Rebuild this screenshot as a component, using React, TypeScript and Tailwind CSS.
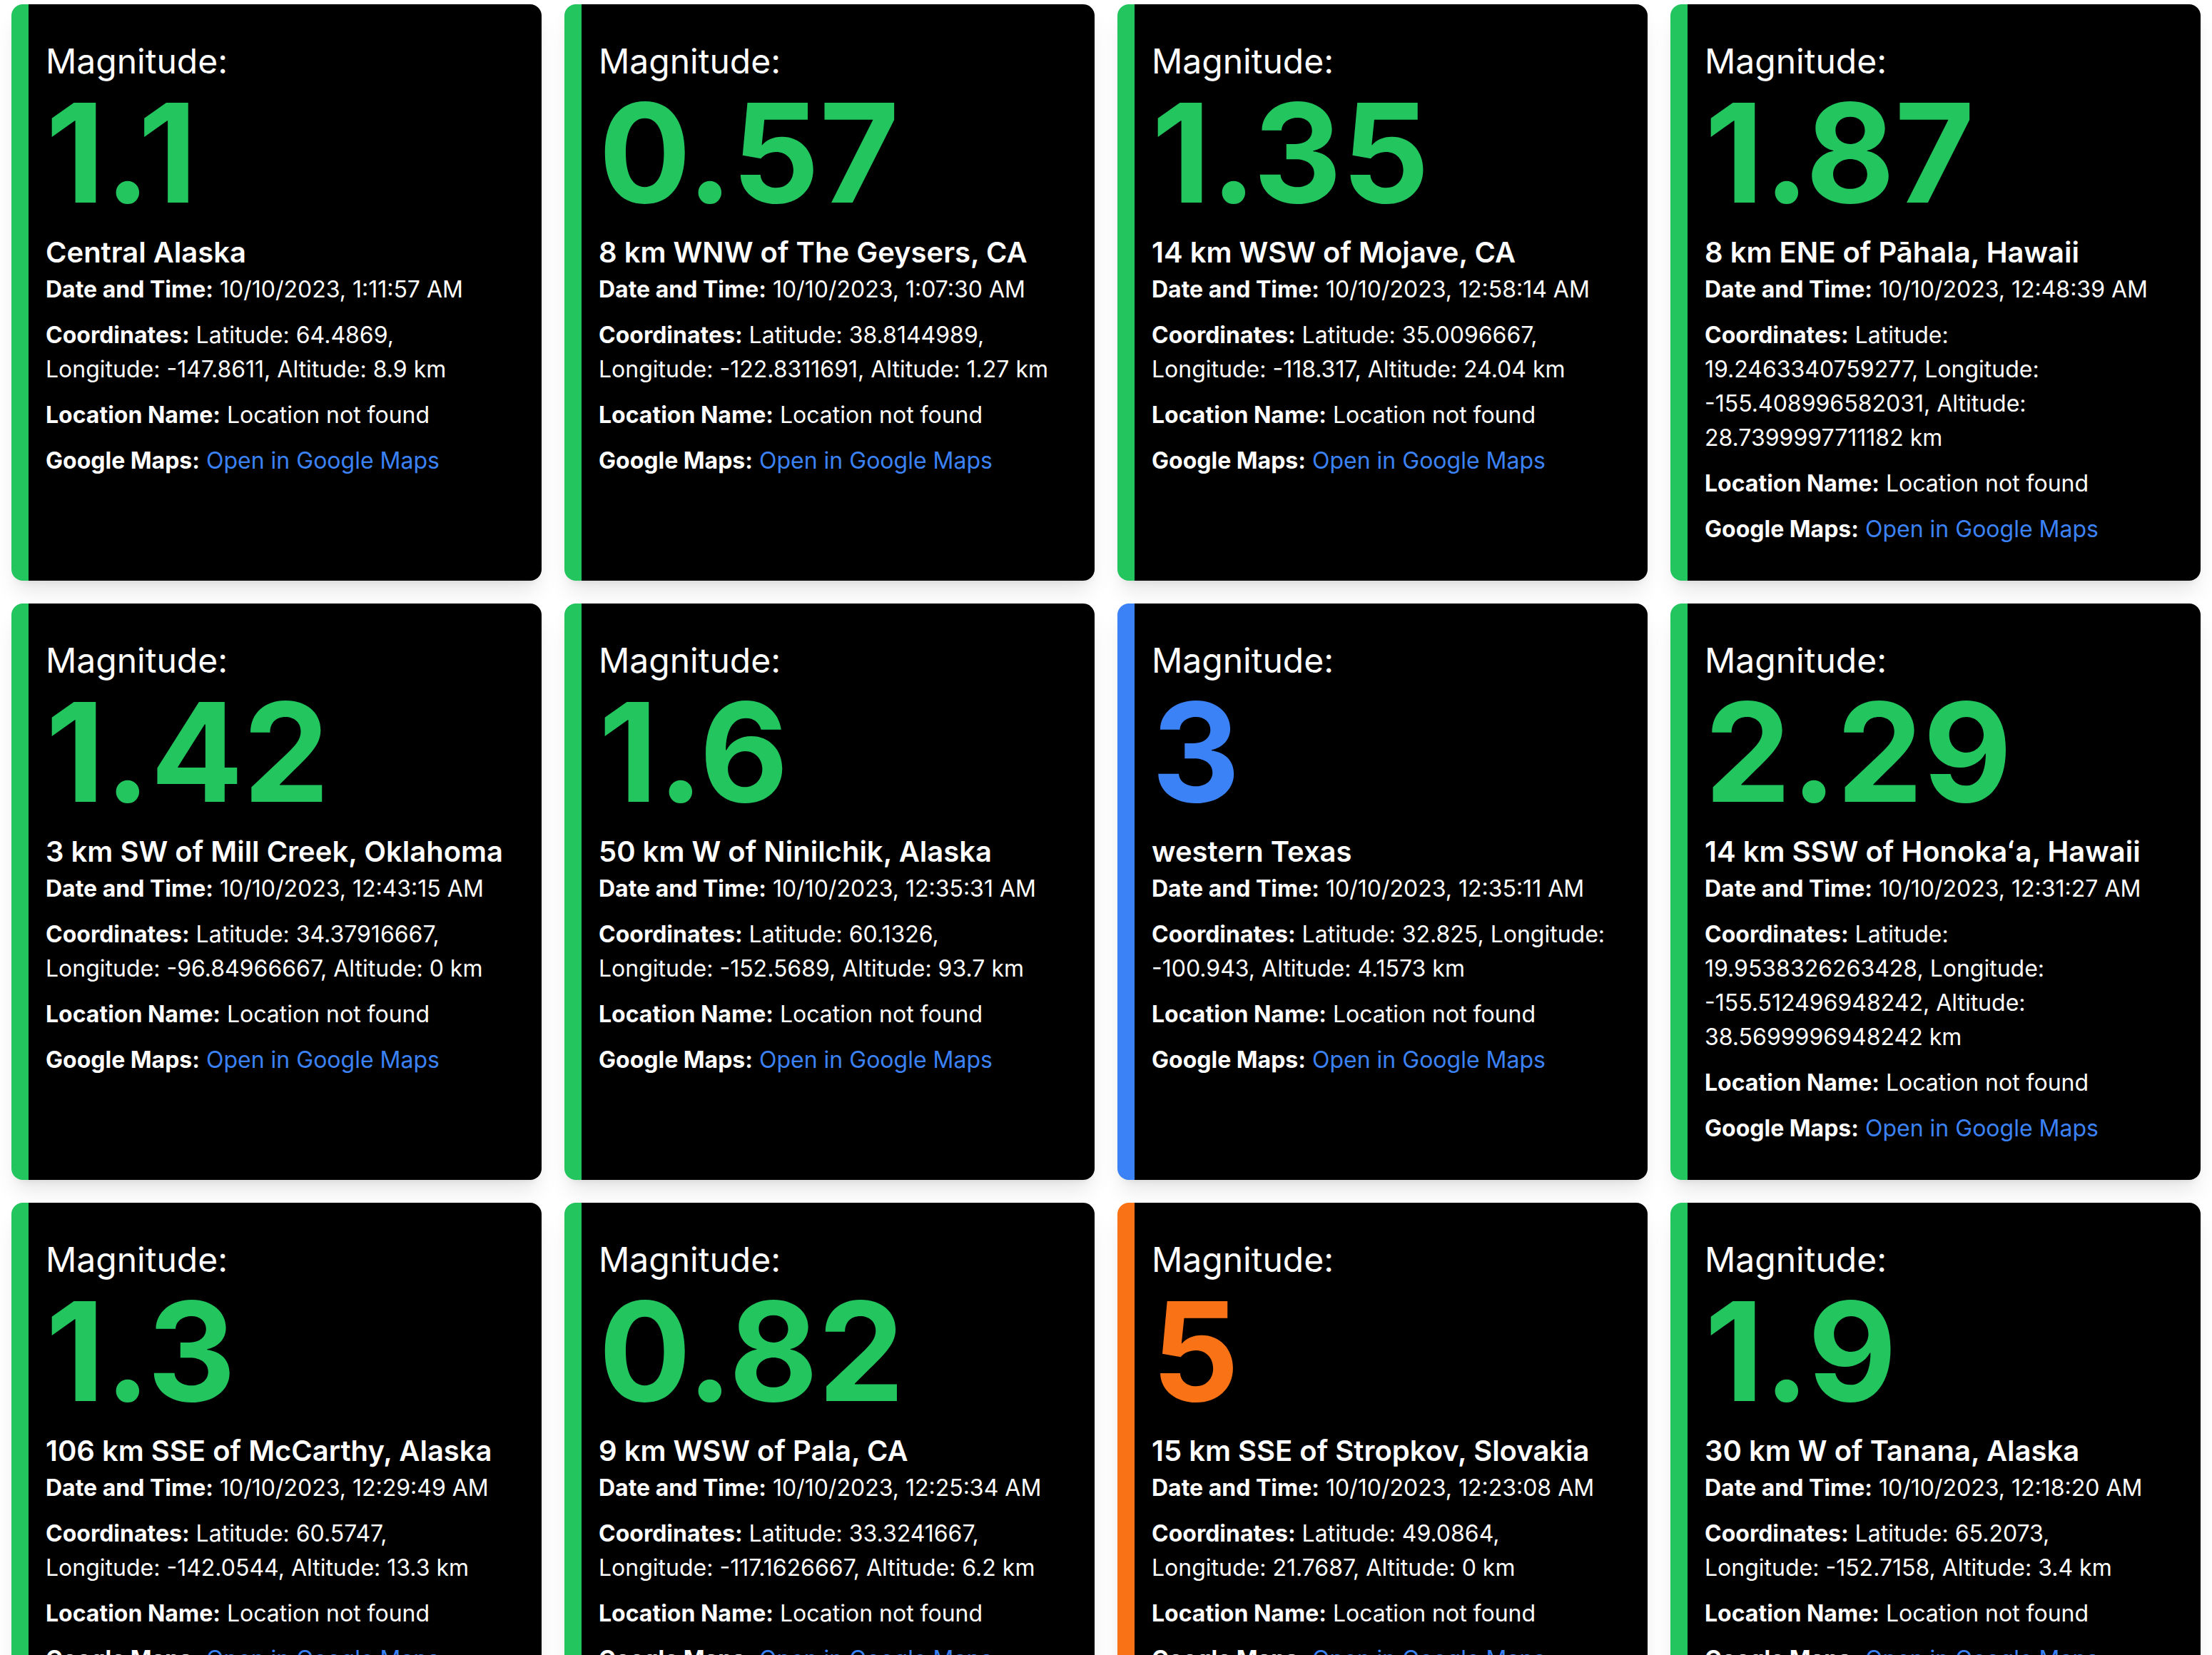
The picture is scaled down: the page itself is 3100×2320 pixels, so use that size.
import React from "react";

type Quake = {
  mag: string;
  color: "green" | "blue" | "orange";
  place: string;
  time: string;
  lat: string;
  lon: string;
  alt: string;
};

const quakes: Quake[] = [
  { mag: "1.1", color: "green", place: "Central Alaska", time: "10/10/2023, 1:11:57 AM", lat: "64.4869", lon: "-147.8611", alt: "8.9" },
  { mag: "0.57", color: "green", place: "8 km WNW of The Geysers, CA", time: "10/10/2023, 1:07:30 AM", lat: "38.8144989", lon: "-122.8311691", alt: "1.27" },
  { mag: "1.35", color: "green", place: "14 km WSW of Mojave, CA", time: "10/10/2023, 12:58:14 AM", lat: "35.0096667", lon: "-118.317", alt: "24.04" },
  { mag: "1.87", color: "green", place: "8 km ENE of Pāhala, Hawaii", time: "10/10/2023, 12:48:39 AM", lat: "19.2463340759277", lon: "-155.408996582031", alt: "28.7399997711182" },
  { mag: "1.42", color: "green", place: "3 km SW of Mill Creek, Oklahoma", time: "10/10/2023, 12:43:15 AM", lat: "34.37916667", lon: "-96.84966667", alt: "0" },
  { mag: "1.6", color: "green", place: "50 km W of Ninilchik, Alaska", time: "10/10/2023, 12:35:31 AM", lat: "60.1326", lon: "-152.5689", alt: "93.7" },
  { mag: "3", color: "blue", place: "western Texas", time: "10/10/2023, 12:35:11 AM", lat: "32.825", lon: "-100.943", alt: "4.1573" },
  { mag: "2.29", color: "green", place: "14 km SSW of Honokaʻa, Hawaii", time: "10/10/2023, 12:31:27 AM", lat: "19.9538326263428", lon: "-155.512496948242", alt: "38.5699996948242" },
  { mag: "1.3", color: "green", place: "106 km SSE of McCarthy, Alaska", time: "10/10/2023, 12:29:49 AM", lat: "60.5747", lon: "-142.0544", alt: "13.3" },
  { mag: "0.82", color: "green", place: "9 km WSW of Pala, CA", time: "10/10/2023, 12:25:34 AM", lat: "33.3241667", lon: "-117.1626667", alt: "6.2" },
  { mag: "5", color: "orange", place: "15 km SSE of Stropkov, Slovakia", time: "10/10/2023, 12:23:08 AM", lat: "49.0864", lon: "21.7687", alt: "0" },
  { mag: "1.9", color: "green", place: "30 km W of Tanana, Alaska", time: "10/10/2023, 12:18:20 AM", lat: "65.2073", lon: "-152.7158", alt: "3.4" },
];

const borderClass = {
  green: "border-[#22c55e]",
  blue: "border-[#3b82f6]",
  orange: "border-[#f97316]",
};
const textClass = {
  green: "text-[#22c55e]",
  blue: "text-[#3b82f6]",
  orange: "text-[#f97316]",
};

function Card({ q }: { q: Quake }) {
  return (
    <div
      className={`bg-black rounded-[16px] border-l-[24px] ${borderClass[q.color]} pl-[24px] pr-[54px] pt-[48px] pb-[48px] text-white shadow-[0_20px_30px_-6px_rgba(0,0,0,0.1),0_8px_12px_-8px_rgba(0,0,0,0.1)]`}
    >
      <div className="text-[48px] leading-[64px] font-normal">Magnitude:</div>
      <div className={`text-[192px] leading-[192px] font-bold ${textClass[q.color]}`}>{q.mag}</div>
      <div className="mt-[16px] text-[40px] leading-[56px] font-semibold">{q.place}</div>
      <p className="text-[32px] leading-[48px]">
        <span className="font-bold">Date and Time:</span> {q.time}
      </p>
      <p className="mt-[16px] text-[32px] leading-[48px]">
        <span className="font-bold">Coordinates:</span> Latitude: {q.lat}, Longitude: {q.lon}, Altitude: {q.alt} km
      </p>
      <p className="mt-[16px] text-[32px] leading-[48px]">
        <span className="font-bold">Location Name:</span> Location not found
      </p>
      <p className="mt-[16px] text-[32px] leading-[48px]">
        <span className="font-bold">Google Maps:</span>{" "}
        <a href="#" className="text-[#3b82f6]">Open in Google Maps</a>
      </p>
    </div>
  );
}

export default function App() {
  return (
    <div
      className="min-h-screen bg-white"
      style={{ fontFamily: "Inter, 'Noto Sans', sans-serif" }}
    >
      <div className="grid grid-cols-4 gap-[32px] px-[16px] pt-[6px] pb-[32px]">
        {quakes.map((q, i) => (
          <Card key={i} q={q} />
        ))}
      </div>
    </div>
  );
}
